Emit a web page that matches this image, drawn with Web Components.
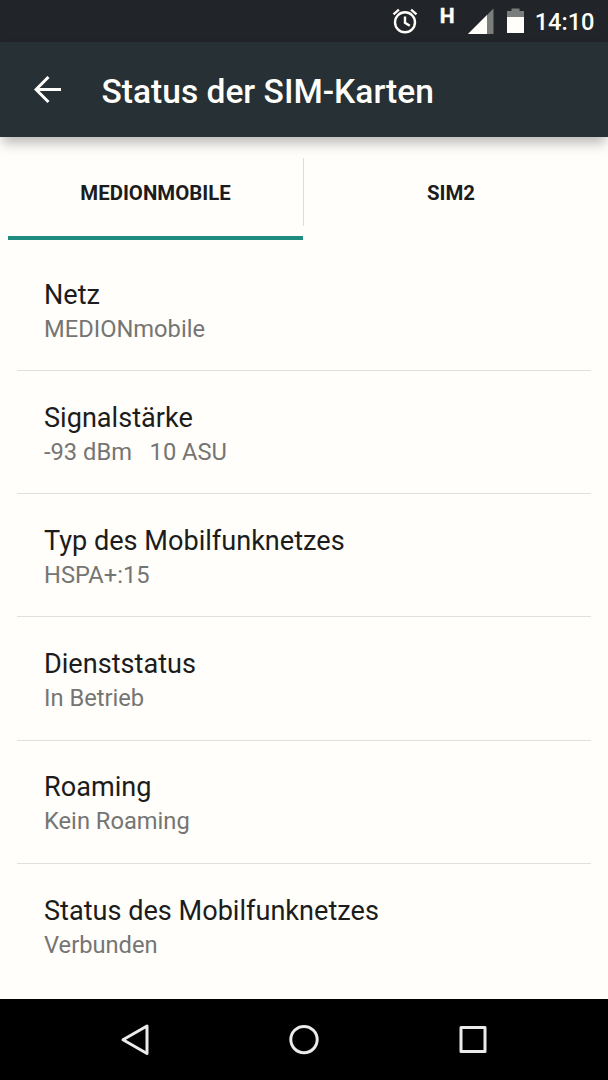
<!DOCTYPE html>
<html lang="de">
<head>
<meta charset="utf-8">
<title>Status der SIM-Karten</title>
<style>
    body {
        margin: 0;
        background: #fffefa;
        font-family: Roboto, "Liberation Sans", sans-serif;
    }
</style>
</head>
<body>
<sim-status-app></sim-status-app>
<script>
class StatusBar extends HTMLElement {
    constructor() {
        super();
        this.attachShadow({ mode: 'open' });
    }
    connectedCallback() {
        this.shadowRoot.innerHTML = `
        <style>
            :host {
                display: flex;
                justify-content: flex-end;
                height: 42px;
                padding-right: 13.5px;
                background: #212529;
                color: #fffefa;
            }
            svg { display: block; flex: none; }
            .net {
                width: 14px;
                font-size: 21px;
                font-weight: 700;
                line-height: 32px;
                margin: 0 14px 0 21px;
                -webkit-text-stroke: .4px #fffefa;
            }
            .time {
                font-size: 23.6px;
                font-weight: 500;
                line-height: 44px;
                margin-left: 11px;
            }
        </style>
        <svg width="28" height="42" viewBox="0 0 28 42" fill="none" stroke="#fffefa" stroke-width="2.4">
            <circle cx="14" cy="22.3" r="10"/>
            <path d="M14 16.500v6.300l4.800 2.900"/>
            <path d="M2.500 14.300l5.400-4.600M25.500 14.300l-5.400-4.600"/>
        </svg>
        <span class="net">H</span>
        <svg width="26" height="42" viewBox="0 0 26 42">
            <path d="M25.500 8.500V34H0z" fill="#7b7d7d"/>
            <path d="M19 15v19H0z" fill="#fffefa"/>
        </svg>
        <svg width="17" height="42" viewBox="0 0 17 42" style="margin-left:13px">
            <path d="M0 11h4.5V8.500h8V11H17v7H0z" fill="#7b7d7d"/>
            <path d="M0 17h17v16H0z" fill="#fffefa"/>
        </svg>
        <span class="time"><slot></slot></span>
        `;
    }
}
customElements.define('status-bar', StatusBar);

class AppToolbar extends HTMLElement {
    constructor() {
        super();
        this.attachShadow({ mode: 'open' });
    }
    connectedCallback() {
        this.shadowRoot.innerHTML = `
        <style>
            :host {
                display: flex;
                align-items: center;
                box-sizing: border-box;
                height: 95px;
                padding-left: 34px;
                background: #263035;
                box-shadow: 0 8px 12px -2px rgba(0, 0, 0, .28);
                color: #fffefa;
            }
            svg { flex: none; margin-right: 39.5px; }
            h1 {
                margin: 4px 0 0;
                font-size: 33.55px;
                font-weight: 500;
                line-height: 40px;
                white-space: nowrap;
            }
        </style>
        <svg width="28" height="28" viewBox="0 0 28 28" fill="none" stroke="#fffefa" stroke-width="3">
            <path d="M27 13.5H2M14.500 1L2 13.5l12.500 12.5"/>
        </svg>
        <h1><slot></slot></h1>
        `;
    }
}
customElements.define('app-toolbar', AppToolbar);

class SimTab extends HTMLElement {
    constructor() {
        super();
        this.attachShadow({ mode: 'open' });
    }
    connectedCallback() {
        this.shadowRoot.innerHTML = `
        <style>
            :host {
                display: block;
                height: 82px;
                border-bottom: 4px solid transparent;
                box-sizing: border-box;
                color: #1c1c1c;
            }
            :host([active]) { border-bottom-color: #1f8c80; }
            div {
                height: 68px;
                line-height: 70px;
                text-align: center;
                font-size: 20.4px;
                font-weight: 700;
            }
            :host([active]) div { border-right: 1px solid #dcdcd8; margin-right: -1px; }
        </style>
        <div><slot></slot></div>
        `;
    }
}
customElements.define('sim-tab', SimTab);

class StatusRow extends HTMLElement {
    constructor() {
        super();
        this.attachShadow({ mode: 'open' });
    }
    connectedCallback() {
        this.shadowRoot.innerHTML = `
        <style>
            :host {
                display: block;
                box-sizing: border-box;
                height: 123.2px;
                padding: 29.8px 27px 0;
                border-bottom: 1px solid #e0e0dc;
            }
            :host(:last-of-type) { border-bottom: 0; }
            div { line-height: 34px; white-space: pre; }
            .title { font-size: 27.1px; color: #1c1c1c; }
            .value { font-size: 23.7px; color: #757573; }
        </style>
        <div class="title">${this.getAttribute('label')}</div>
        <div class="value"><slot></slot></div>
        `;
    }
}
customElements.define('status-row', StatusRow);

class NavBar extends HTMLElement {
    constructor() {
        super();
        this.attachShadow({ mode: 'open' });
    }
    connectedCallback() {
        this.shadowRoot.innerHTML = `
        <style>
            :host {
                display: grid;
                grid-template-columns: repeat(3, 168.5px);
                justify-content: center;
                align-items: center;
                justify-items: center;
                height: 81px;
                background: #000;
            }
            svg { display: block; fill: none; stroke: #ebebeb; stroke-width: 3; stroke-linejoin: round; }
        </style>
        <svg width="34" height="34" viewBox="0 0 34 34"><path d="M28 3v27.500L4 16.700z"/></svg>
        <svg width="34" height="34" viewBox="0 0 34 34"><circle cx="17" cy="16.6" r="13.2"/></svg>
        <svg width="34" height="34" viewBox="0 0 34 34"><path d="M5 4.500h24v24H5z"/></svg>
        `;
    }
}
customElements.define('nav-bar', NavBar);

class SimStatusApp extends HTMLElement {
    constructor() {
        super();
        this.attachShadow({ mode: 'open' });
    }
    connectedCallback() {
        this.render();
    }

    render() {
        this.shadowRoot.innerHTML = `
        <style>
            :host {
                display: flex;
                flex-direction: column;
                height: 1080px;
                overflow: hidden;
            }
            nav {
                display: grid;
                grid-template-columns: 295px 296px;
                padding: 21px 8px 0;
            }
            main {
                flex: 1;
                min-height: 0;
                padding: 7.8px 17px 0;
            }
        </style>
        <status-bar>14:10</status-bar>
        <app-toolbar>Status der SIM-Karten</app-toolbar>
        <nav>
            <sim-tab active>MEDIONMOBILE</sim-tab>
            <sim-tab>SIM2</sim-tab>
        </nav>
        <main>
            <status-row label="Netz">MEDIONmobile</status-row>
            <status-row label="Signalstärke">-93 dBm   10 ASU</status-row>
            <status-row label="Typ des Mobilfunknetzes">HSPA+:15</status-row>
            <status-row label="Dienststatus">In Betrieb</status-row>
            <status-row label="Roaming">Kein Roaming</status-row>
            <status-row label="Status des Mobilfunknetzes">Verbunden</status-row>
        </main>
        <nav-bar></nav-bar>
        `;
    }
}
customElements.define('sim-status-app', SimStatusApp);
</script>
</body>
</html>
